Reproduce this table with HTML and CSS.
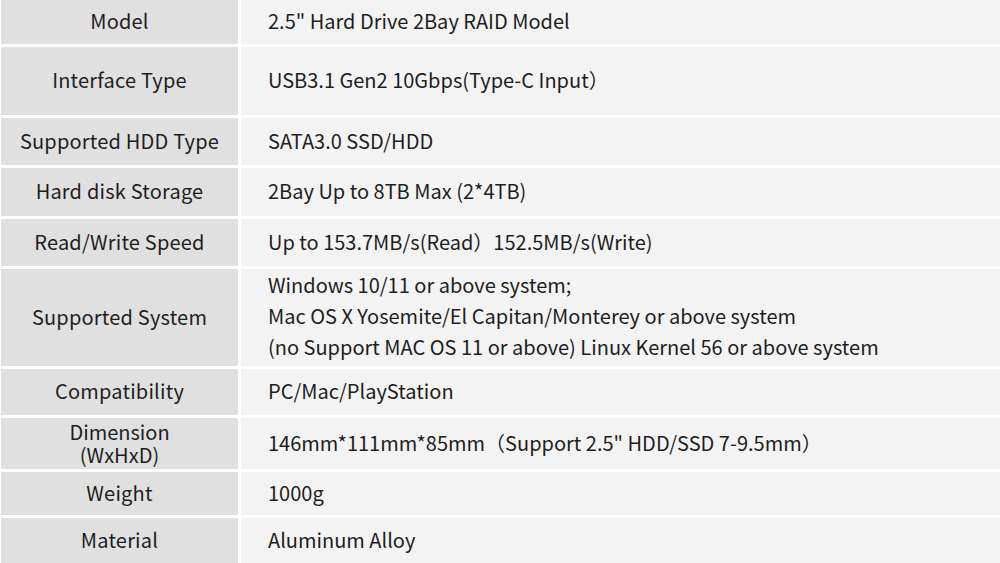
FILE: index.html
```html
<!DOCTYPE html>
<html>
<head>
<meta charset="utf-8">
<link rel="stylesheet" href="styles.css">
</head>
<body>
<div class="spec">
  <div class="k">Model</div><div class="v">2.5" Hard Drive 2Bay RAID Model</div>
  <div class="k">Interface Type</div><div class="v">USB3.1 Gen2 10Gbps(Type-C Input）</div>
  <div class="k">Supported HDD Type</div><div class="v">SATA3.0 SSD/HDD</div>
  <div class="k">Hard disk Storage</div><div class="v">2Bay Up to 8TB Max (2*4TB)</div>
  <div class="k">Read/Write Speed</div><div class="v">Up to 153.7MB/s(Read）152.5MB/s(Write)</div>
  <div class="k">Supported System</div><div class="v multi">Windows 10/11 or above system;<br>Mac OS X Yosemite/El Capitan/Monterey or above system<br>(no Support MAC OS 11 or above) Linux Kernel 56 or above system</div>
  <div class="k">Compatibility</div><div class="v">PC/Mac/PlayStation</div>
  <div class="k small">Dimension<br>(WxHxD)</div><div class="v">146mm*111mm*85mm（Support 2.5" HDD/SSD 7-9.5mm）</div>
  <div class="k">Weight</div><div class="v">1000g</div>
  <div class="k">Material</div><div class="v">Aluminum Alloy</div>
</div>
</body>
</html>
```
FILE: styles.css
```css
html, body {
  margin: 0;
  padding: 0;
  background: #ffffff;
}
body {
  width: 1000px;
  height: 563px;
  overflow: hidden;
  font-family: "Noto Sans CJK SC", "Noto Sans", sans-serif;
  color: #1e1e1e;
}
.spec {
  display: grid;
  grid-template-columns: 237px 759px;
  grid-template-rows: 44px 68px 47px 48px 47px 97px 46px 51px 43px 45px;
  gap: 3px;
  padding-left: 1px;
}
.k {
  background: #e0e0e0;
  display: flex;
  align-items: center;
  justify-content: center;
  text-align: center;
  font-size: 20px;
  line-height: 24px;
  letter-spacing: 0.2px;
  padding-bottom: 2px;
  box-sizing: border-box;
}
.k.small {
  line-height: 23px;
  letter-spacing: 0;
  padding-bottom: 2px;
}
.v {
  background: #f3f3f3;
  display: flex;
  align-items: center;
  padding-left: 27px;
  padding-bottom: 2px;
  box-sizing: border-box;
  font-size: 20px;
  line-height: 24px;
}
.v.multi {
  display: block;
  padding-top: 0;
  line-height: 31px;
}
```
